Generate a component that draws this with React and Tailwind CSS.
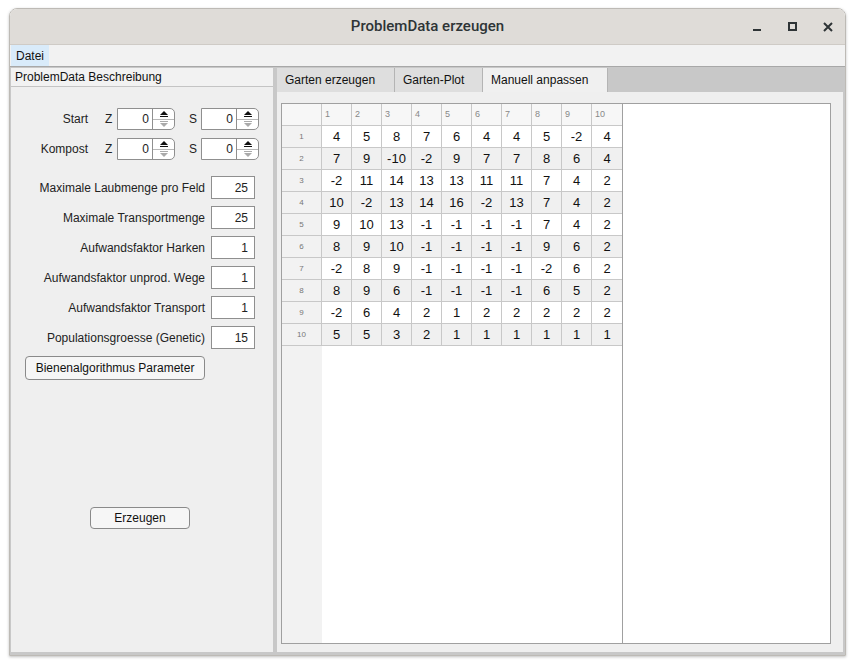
import React from "react";

const ROWS = [
  [4, 5, 8, 7, 6, 4, 4, 5, -2, 4],
  [7, 9, -10, -2, 9, 7, 7, 8, 6, 4],
  [-2, 11, 14, 13, 13, 11, 11, 7, 4, 2],
  [10, -2, 13, 14, 16, -2, 13, 7, 4, 2],
  [9, 10, 13, -1, -1, -1, -1, 7, 4, 2],
  [8, 9, 10, -1, -1, -1, -1, 9, 6, 2],
  [-2, 8, 9, -1, -1, -1, -1, -2, 6, 2],
  [8, 9, 6, -1, -1, -1, -1, 6, 5, 2],
  [-2, 6, 4, 2, 1, 2, 2, 2, 2, 2],
  [5, 5, 3, 2, 1, 1, 1, 1, 1, 1],
];

const FIELDS = [
  ["Maximale Laubmenge pro Feld", "25"],
  ["Maximale Transportmenge", "25"],
  ["Aufwandsfaktor Harken", "1"],
  ["Aufwandsfaktor unprod. Wege", "1"],
  ["Aufwandsfaktor Transport", "1"],
  ["Populationsgroesse (Genetic)", "15"],
];

function Spinner() {
  return (
    <div className="flex h-[22px] w-[58px] rounded-r-[5px] border border-[#8f8f8f] bg-white">
      <div className="flex flex-1 items-center justify-end pr-[3px] text-[12px]">0</div>
      <div className="flex w-[22px] flex-col border-l border-[#8f8f8f]">
        <div className="flex flex-1 items-center justify-center border-b border-[#b8b8b8]">
          <svg width="10" height="8" viewBox="0 0 10 8">
            <path d="M1 5 L5 1 L9 5 Z" fill="#111" />
            <rect x="1" y="6" width="8" height="1" fill="#111" />
          </svg>
        </div>
        <div className="flex flex-1 items-center justify-center">
          <svg width="10" height="8" viewBox="0 0 10 8">
            <rect x="1" y="1" width="8" height="1" fill="#aaa" />
            <path d="M1 3 L5 7 L9 3 Z" fill="#aaa" />
          </svg>
        </div>
      </div>
    </div>
  );
}

function SpinRow({ label }) {
  return (
    <div className="flex h-[22px] items-center text-[12px] text-[#222]">
      <div className="w-[77px] text-right">{label}</div>
      <div className="ml-[17px] w-[12px]">Z</div>
      <Spinner />
      <div className="ml-[14px] w-[12px]">S</div>
      <Spinner />
    </div>
  );
}

export default function App() {
  return (
    <div
      className="h-[664px] w-[855px] bg-white pl-[9px] pt-[8px]"
      style={{ fontFamily: '"Liberation Sans", Arial, sans-serif' }}
    >
      <div className="flex h-[648px] w-[837px] flex-col overflow-hidden rounded-t-[8px] border border-[#bdbab5] shadow-[0_1px_3px_rgba(0,0,0,0.25)]">
        {/* title bar */}
        <div className="relative flex h-[36px] items-center justify-center border-b border-[#cfcbc6] bg-[#dfdcd8]">
          <span
            className="text-[15px] font-medium text-[#2e3436]"
            style={{ fontFamily: "Roboto, sans-serif" }}
          >
            ProblemData erzeugen
          </span>
          <div className="absolute right-[12px] top-0 flex h-full items-center gap-[26px]">
            <svg width="9" height="9" viewBox="0 0 9 9">
              <rect x="0" y="7" width="8" height="2" fill="#2e3436" />
            </svg>
            <svg width="9" height="9" viewBox="0 0 9 9">
              <rect x="1" y="1" width="7" height="7" fill="none" stroke="#2e3436" strokeWidth="2" />
            </svg>
            <svg width="10" height="10" viewBox="0 0 10 10">
              <path d="M1 1 L9 9 M9 1 L1 9" stroke="#2e3436" strokeWidth="2" />
            </svg>
          </div>
        </div>
        {/* menu bar */}
        <div className="flex h-[22px] border-b border-[#a8a8a8] bg-[#f2f2f2] pl-[1px]">
          <div className="flex items-center bg-[#d9ebfa] px-[5px] text-[12px] text-[#111]">Datei</div>
        </div>
        {/* body */}
        <div className="flex flex-1 gap-[4px] bg-[#c8c8c8] pb-[3px] pl-[1px] pr-[2px] pt-[1px]">
          {/* left panel */}
          <div className="flex w-[262px] flex-col bg-[#efefef]">
            <div className="flex h-[19px] items-center border-b border-[#c4c4c4] bg-[#f2f2f2] pl-[4px] text-[12px] text-[#111]">
              ProblemData Beschreibung
            </div>
            <div className="flex flex-1 flex-col pt-[21px]">
              <div className="flex flex-col gap-[8px]">
                <SpinRow label="Start" />
                <SpinRow label="Kompost" />
              </div>
              <div className="mt-[16px] flex flex-col gap-[7px]">
                {FIELDS.map(([label, val]) => (
                  <div key={label} className="flex h-[23px] items-center text-[12px] text-[#222]">
                    <div className="w-[194px] text-right">{label}</div>
                    <div className="ml-[6px] flex h-[23px] w-[44px] items-center justify-end border border-[#8f8f8f] bg-white pr-[6px]">
                      {val}
                    </div>
                  </div>
                ))}
              </div>
              <div className="ml-[14px] mt-[7px] flex h-[24px] w-[180px] items-center justify-center rounded-[4px] border border-[#8a8a8a] bg-[#f6f6f6] text-[12px] text-[#111]">
                Bienenalgorithmus Parameter
              </div>
              <div className="ml-[79px] mt-[127px] flex h-[22px] w-[100px] items-center justify-center rounded-[4px] border border-[#8a8a8a] bg-[#f6f6f6] text-[12px] text-[#111]">
                Erzeugen
              </div>
            </div>
          </div>
          {/* right panel */}
          <div className="flex flex-1 flex-col">
            <div className="flex h-[24px] bg-[#c8c8c8] text-[12px] text-[#111]">
              <div className="flex w-[118px] items-center border-r border-[#b4b4b4] bg-[#dedede] pl-[8px]">Garten erzeugen</div>
              <div className="flex w-[88px] items-center border-r border-[#b4b4b4] bg-[#dedede] pl-[8px]">Garten-Plot</div>
              <div className="flex w-[125px] items-center border-r border-[#b4b4b4] bg-[#f0f0f0] pl-[8px]">Manuell anpassen</div>
            </div>
            <div className="flex-1 bg-[#efefef] pb-[8px] pl-[4px] pr-[12px] pt-[11px]">
              <div className="flex h-full border border-[#a0a0a0] bg-white">
                <div className="flex w-[341px] flex-col border-r border-[#a0a0a0]">
                  <div className="flex h-[22px] bg-[#f7f7f7]">
                    <div className="w-[40px] border-b border-r border-[#c8c8c8]" />
                    {Array.from({ length: 10 }, (_, i) => (
                      <div
                        key={i}
                        className="w-[30px] border-b border-r border-[#c8c8c8] pl-[3px] pt-[4px] text-[9px] text-[#888] last:border-r-0"
                      >
                        {i + 1}
                      </div>
                    ))}
                  </div>
                  {ROWS.map((row, r) => (
                    <div key={r} className={`flex h-[22px] ${r % 2 === 1 ? "bg-[#f0f0f0]" : "bg-white"}`}>
                      <div className="flex w-[40px] items-center justify-center border-b border-r border-[#c8c8c8] bg-[#f2f2f2] text-[8px] text-[#777]">
                        {r + 1}
                      </div>
                      {row.map((v, c) => (
                        <div
                          key={c}
                          className="flex w-[30px] items-center justify-center border-b border-r border-[#c8c8c8] text-[13px] text-[#111] last:border-r-0"
                        >
                          {v}
                        </div>
                      ))}
                    </div>
                  ))}
                  <div className="flex flex-1">
                    <div className="w-[40px] bg-[#f2f2f2]" />
                    <div className="flex-1 bg-white" />
                  </div>
                </div>
                <div className="flex-1 bg-white" />
              </div>
            </div>
          </div>
        </div>
      </div>
    </div>
  );
}
